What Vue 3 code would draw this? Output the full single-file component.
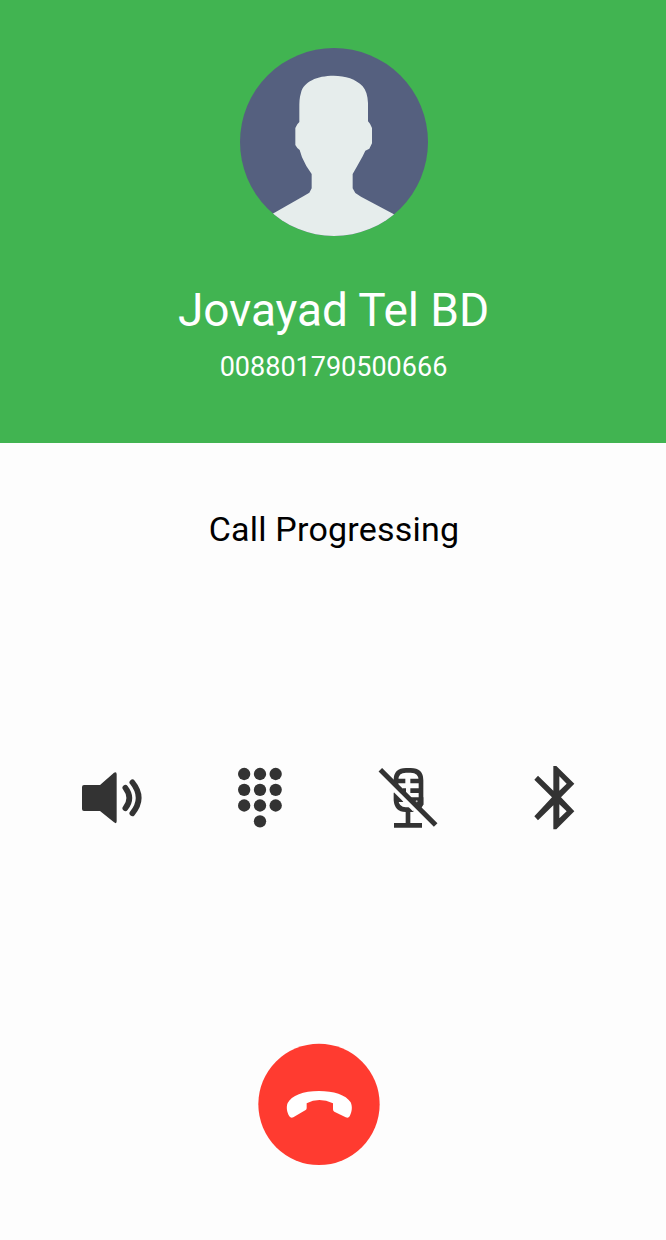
<script setup>
import { ref } from 'vue';

const contact = ref({
    name: 'Jovayad Tel BD',
    number: '008801790500666'
});
const status = ref('Call Progressing');

const keypadDots = [
    [48.5, 42], [96, 42], [143, 42],
    [48.5, 89.5], [96, 89.5], [143, 89.5],
    [48.5, 136.5], [96, 136.5], [143, 136.5],
    [96, 184]
];
</script>

<template>
    <div class="call-screen">
        <header class="contact">
            <svg class="avatar" viewBox="0 0 564 564">
                <defs>
                    <clipPath id="avatar-clip">
                        <circle cx="282" cy="282" r="282" />
                    </clipPath>
                </defs>
                <g clip-path="url(#avatar-clip)">
                    <rect width="564" height="564" fill="#55607f" />
                    <path fill="#e6edec"
                        d="M281 83C231 83 191 101 183 134C178 148 178 165 178 180V222L172 229L166 240V291L172 300L179 306L186 328L199 354L215 378V421L208 434L190 445L98 497L70 520V564H490V520L459 497L363 446L346 435L338 421V378L350 357L368 325L376 308L388 302L396 286V240L390 227L384 220V165C383 143 378 127 368 115C348 93 316 83 281 83Z" />
                </g>
            </svg>
            <h1 class="name">{{ contact.name }}</h1>
            <p class="number">{{ contact.number }}</p>
        </header>

        <main class="body">
            <p class="status">{{ status }}</p>

            <div class="actions">
                <button class="action speaker" aria-label="Speaker">
                    <svg viewBox="0 -6 240 234">
                        <path class="fill" d="M36 75H84L126 38Q134 34 134 43V184Q134 193 126 187L84 153H36Q30 153 30 147V81Q30 75 36 75Z" />
                        <path class="wave" d="M160 83Q184 114 160 145" />
                        <path class="wave" d="M181 67Q219 114 181 160" />
                    </svg>
                </button>
                <button class="action keypad" aria-label="Keypad">
                    <svg viewBox="0 -6 192 234">
                        <circle v-for="(dot, i) in keypadDots" :key="i" class="fill" :cx="dot[0]" :cy="dot[1]" r="18.5" />
                    </svg>
                </button>
                <button class="action mute" aria-label="Mute">
                    <svg viewBox="0 0 228 234">
                        <path class="line" d="M78 80V66Q78 37 108 37H122Q153 37 153 67V140" />
                        <path class="line" d="M74 69H106M121 69H158M121 98H158M98 98H108" />
                        <path class="line" d="M78 104V126Q80 154 107 155H130" />
                        <path class="fill" d="M72 100L82 106L100 125V132H84L72 122ZM122 118H160V140L154 150Z" />
                        <path class="gap" d="M27 49L133 155" />
                        <path class="line" d="M114 154V200M72 202H156" />
                        <path class="line slash" d="M31 35L197 201" />
                        <circle class="hole" cx="140" cy="130" r="3" />
                    </svg>
                </button>
                <button class="action bluetooth" aria-label="Bluetooth">
                    <svg viewBox="0 0 180 234">
                        <path class="fill" fill-rule="evenodd"
                            d="M88 24H97L151 77L111 118L151 160L97 214H88V142L42 187L31 175L84 118L31 65L42 53L88 98ZM106 55V98L128 77ZM106 139V181L128 160Z" />
                    </svg>
                </button>
            </div>

            <button class="hangup" aria-label="End call">
                <svg viewBox="0 0 414 414">
                    <circle cx="207" cy="205" r="182" fill="#ff3b30" />
                    <path fill="#fff"
                        d="M207 165C160 165 124 179 113 201C108 213 111 229 118 241Q122 247 130 244L167 222Q170 220 170 216V202Q207 182 249 202V220Q249 225 253 227L287 244Q295 248 299 241C306 228 308 212 302 199C288 176 250 165 207 165Z" />
                </svg>
            </button>
        </main>
    </div>
</template>

<style>
body {
    margin: 0;
    background: #fdfdfd;
}
</style>

<style scoped>
.call-screen {
    display: flex;
    flex-direction: column;
    width: 666px;
    height: 1240px;
    overflow: hidden;
    background: #fdfdfd;
    font-family: Roboto, 'Liberation Sans', sans-serif;
}

.contact {
    display: flex;
    flex-direction: column;
    align-items: center;
    box-sizing: border-box;
    height: 443px;
    padding: 48px 0 0 1px;
    background: #41b451;
    color: #fff;
}

.avatar {
    display: block;
    width: 188px;
    height: 188px;
}

.name {
    margin: 46px 0 0;
    font-size: 46px;
    font-weight: 400;
    line-height: 56px;
    letter-spacing: -0.05px;
    white-space: nowrap;
}

.number {
    margin: 13px 0 0;
    font-size: 27px;
    line-height: 32px;
}

.body {
    display: flex;
    flex-direction: column;
    flex: 1;
}

.status {
    margin: 66px 0 0;
    padding-left: 2px;
    font-size: 34px;
    line-height: 40px;
    letter-spacing: 0.22px;
    text-align: center;
    color: #000;
}

.actions {
    display: flex;
    margin-top: 209px;
    padding-left: 72px;
}

button {
    padding: 0;
    border: none;
    background: none;
    cursor: pointer;
}

button svg {
    display: block;
    width: 100%;
    height: 100%;
}

.action {
    height: 78px;
}

.speaker {
    width: 80px;
    margin-right: 76px;
}

.keypad {
    width: 64px;
    margin-right: 78px;
}

.mute {
    width: 76px;
    margin-right: 78px;
}

.bluetooth {
    width: 60px;
}

.fill {
    fill: #333;
}

.wave {
    fill: none;
    stroke: #333;
    stroke-width: 17;
    stroke-linecap: round;
}

.line {
    fill: none;
    stroke: #333;
    stroke-width: 14;
}

.slash {
    stroke-width: 15;
}

.gap {
    fill: none;
    stroke: #fdfdfd;
    stroke-width: 13;
}

.hole {
    fill: #bbb;
}

.hangup {
    width: 138px;
    height: 138px;
    margin: 200px 0 0 250px;
}
</style>
